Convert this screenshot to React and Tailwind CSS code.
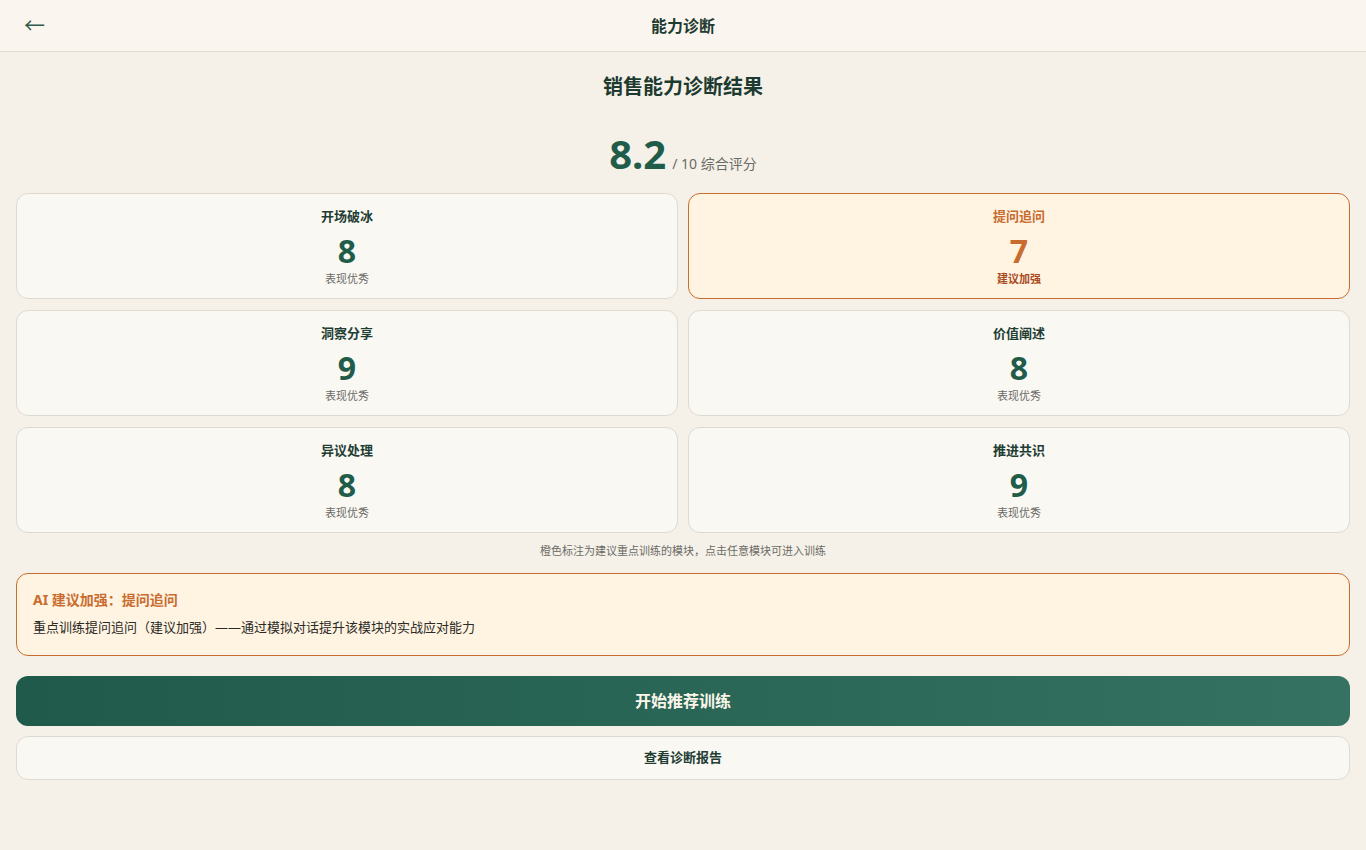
import React from 'react';

const modules = [
  { name: '开场破冰', score: 8, note: '表现优秀' },
  { name: '提问追问', score: 7, note: '建议加强', weak: true },
  { name: '洞察分享', score: 9, note: '表现优秀' },
  { name: '价值阐述', score: 8, note: '表现优秀' },
  { name: '异议处理', score: 8, note: '表现优秀' },
  { name: '推进共识', score: 9, note: '表现优秀' },
];

function ModuleCard({ name, score, note, weak }) {
  return (
    <button
      type="button"
      className={
        weak
          ? 'flex h-[106px] flex-col items-center rounded-xl border border-[#c96c30] bg-[#fff3e1] pt-[12px]'
          : 'flex h-[106px] flex-col items-center rounded-xl border border-[#dedad2] bg-[#faf8f3] pt-[12px]'
      }
    >
      <span className={weak ? 'text-[13px] font-bold leading-[20px] text-[#c96c30]' : 'text-[13px] font-bold leading-[20px] text-[#223d33]'}>
        {name}
      </span>
      <span className={weak ? 'mt-[7px] text-[32px] font-bold leading-[36px] text-[#c96c30]' : 'mt-[7px] text-[32px] font-bold leading-[36px] text-[#1f5c4a]'}>
        {score}
      </span>
      <span className={weak ? 'mt-[2px] text-[11px] font-bold leading-[16px] text-[#a84a1e]' : 'mt-[2px] text-[11px] leading-[16px] text-[#6b6b66]'}>
        {note}
      </span>
    </button>
  );
}

export default function App() {
  return (
    <div
      className="min-h-screen bg-[#f5f1e8] text-[#1f3a30]"
      style={{ fontFamily: '"Noto Sans", "Noto Sans CJK SC", sans-serif' }}
    >
      <header className="flex h-[52px] items-center border-b border-[#e2ddd0] bg-[#faf6ef] px-6">
        <button type="button" className="w-[56px] text-left text-[21px] leading-none text-[#2f5a4a]">←</button>
        <h1 className="flex-1 text-center text-[16px] font-bold text-[#1f3a30]">能力诊断</h1>
        <div className="w-[56px]" />
      </header>

      <main className="px-4 pt-[20px]">
        <h2 className="text-center text-[20px] font-bold leading-[30px] text-[#1c3a2f]">销售能力诊断结果</h2>

        <div className="mt-[28px] flex items-baseline justify-center gap-[6px]">
          <span className="text-[40px] font-bold leading-[48px] text-[#1f5c4a]">8.2</span>
          <span className="text-[14px] text-[#6b6b66]">/ 10 综合评分</span>
        </div>

        <div className="mt-[15px] grid grid-cols-2 gap-x-[10px] gap-y-[11px]">
          {modules.map((m) => (
            <ModuleCard key={m.name} {...m} />
          ))}
        </div>

        <p className="mt-[10px] text-center text-[11px] leading-[16px] text-[#6b6b66]">
          橙色标注为建议重点训练的模块，点击任意模块可进入训练
        </p>

        <div className="mt-[14px] rounded-xl border border-[#c96c30] bg-[#fff3e1] px-4 pb-[18px] pt-[15px]">
          <div className="text-[14px] font-bold leading-[22px] text-[#c96c30]">AI 建议加强：提问追问</div>
          <div className="mt-[6px] text-[13px] leading-[20px] text-[#2a2a26]">
            重点训练提问追问（建议加强）——通过模拟对话提升该模块的实战应对能力
          </div>
        </div>

        <button
          type="button"
          className="mt-[20px] flex h-[50px] w-full items-center justify-center rounded-xl bg-gradient-to-r from-[#1f5a4a] to-[#357262] text-[16px] font-bold text-[#fbf6ea]"
        >
          开始推荐训练
        </button>

        <button
          type="button"
          className="mt-[10px] flex h-[44px] w-full items-center justify-center rounded-xl border border-[#dedad2] bg-[#faf8f3] text-[13px] font-bold text-[#223d33]"
        >
          查看诊断报告
        </button>
      </main>
    </div>
  );
}
